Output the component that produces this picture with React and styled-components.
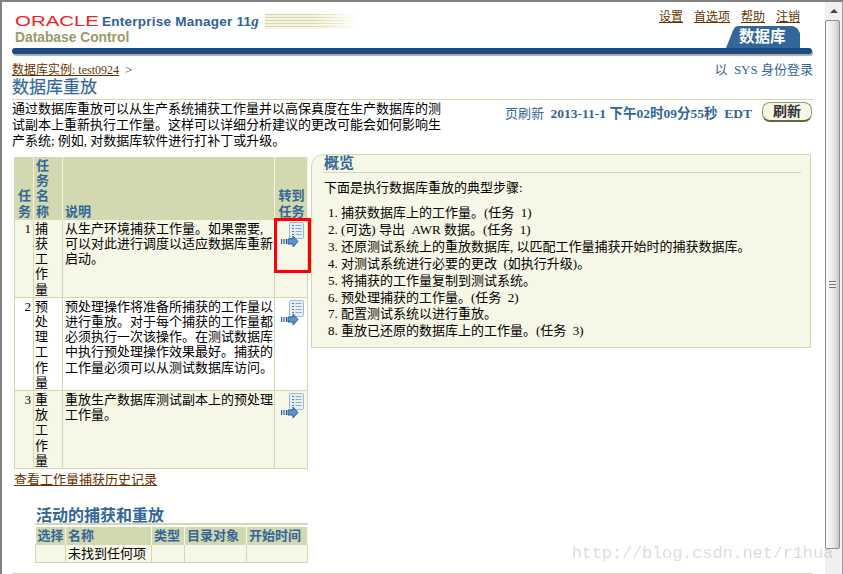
import React from "react";
import styled, { createGlobalStyle } from "styled-components";

const Global = createGlobalStyle`
  html, body { margin: 0; padding: 0; background: #fff; overflow: hidden; }
  body { font-family: "Liberation Serif", "Noto Sans CJK SC", serif; font-size: 13px; color: #000; }
`;

const Frame = styled.div`
  position: relative;
  display: flex;
  width: 843px;
  height: 574px;
  box-sizing: border-box;
  border-top: 2px solid #808080;
  border-left: 2px solid #808080;
  border-right: 1px solid #a0a0a0;
  overflow: hidden;
`;
const Page = styled.div`
  width: 823px;
  flex: none;
  box-sizing: border-box;
  padding: 0 12px 0 10px;
  display: flex;
  flex-direction: column;
`;
const Masthead = styled.header`
  display: flex;
  justify-content: space-between;
  height: 46px;
`;
const Brand = styled.div`
  padding: 11px 0 0 3px;
  display: flex;
  flex-direction: column;
`;
const BrandTop = styled.div`
  display: flex;
  align-items: center;
  height: 16px;
`;
const OracleMark = styled.svg`
  width: 85px;
  height: 16px;
  flex: none;
`;
const ProductName = styled.span`
  margin-left: 2px;
  font: bold 13.5px "Liberation Sans", sans-serif;
  letter-spacing: 0.25px;
  color: #2f6296;
  white-space: nowrap;
`;
const Version = styled.i`
  font: italic bold 15px "Liberation Serif", serif;
`;
const Stripes = styled.div`
  width: 94px;
  height: 15px;
  margin-left: 6px;
  background: repeating-linear-gradient(to bottom, #d8d8a8 0 1px, #f4f4e0 1px 3px);
  -webkit-mask-image: linear-gradient(to right, #000 50%, transparent);
  mask-image: linear-gradient(to right, #000 50%, transparent);
`;
const DbControl = styled.div`
  margin-top: 1px;
  font: bold 13.8px "Liberation Sans", sans-serif;
  color: #9a9a68;
`;
const Global2 = styled.div`
  width: 141px;
  margin-right: 13px;
  display: flex;
  flex-direction: column;
  align-items: flex-end;
`;
const TopLinks = styled.nav`
  display: flex;
  gap: 11px;
  padding-top: 8px;
  height: 16px;
  white-space: nowrap;
`;
const TopLink = styled.a`
  font-size: 12px;
  line-height: 14px;
  color: #663300;
  text-decoration: underline;
`;
const Tab = styled.div`
  width: 74px;
  height: 22px;
  box-sizing: border-box;
  background: #336699;
  color: #fff;
  font-weight: bold;
  font-size: 15.5px;
  line-height: 22px;
  padding-left: 13px;
  clip-path: polygon(0 100%, 7px 20%, 9px 4%, 12px 0, calc(100% - 7px) 0, calc(100% - 3px) 2px, 100% 7px, 100% 100%);
`;
const Bar = styled.div`
  height: 6px;
  margin-right: 1px;
  background: #1d4c82;
  border-radius: 4px;
  box-shadow: 1px 2px 1px #aaa;
`;
const CrumbRow = styled.div`
  display: flex;
  justify-content: space-between;
  margin-top: 8px;
  height: 16px;
  line-height: 16px;
`;
const Crumb = styled.div`
  font-size: 12px;
  color: #663300;
`;
const CrumbLink = styled.a`
  color: #663300;
  text-decoration: underline;
`;
const Sep = styled.span`
  margin-left: 6px;
  font-size: 13px;
`;
const LoginAs = styled.div`
  font-size: 13px;
  color: #336699;
  white-space: pre;
`;
const Title = styled.h1`
  margin: 0;
  height: 21px;
  font-size: 17px;
  line-height: 20px;
  font-weight: normal;
  color: #336699;
  border-bottom: 1px solid #d2d8b0;
  -webkit-text-stroke: 0.2px #336699;
`;
const IntroRow = styled.div`
  display: flex;
  justify-content: space-between;
  align-items: flex-start;
  height: 54px;
`;
const Intro = styled.p`
  margin: 1px 0 0;
  width: 432px;
  line-height: 16px;
`;
const Refresh = styled.div`
  display: flex;
  align-items: center;
  margin-right: 1px;
  color: #336699;
  font-size: 13px;
  padding-top: 2px;
  white-space: pre;
`;
const Strong = styled.b`
  font-weight: bold;
  font-size: 13.5px;
`;
const RefreshButton = styled.button`
  margin-left: 10px;
  width: 50px;
  height: 20px;
  padding: 0;
  border: 1px solid #99996a;
  border-bottom: 2px solid #66663a;
  border-radius: 8px;
  background: #f7f7e7;
  color: #333;
  font: bold 14px "Liberation Serif", "Noto Sans CJK SC", serif;
  line-height: 16px;
`;
const Columns = styled.div`
  display: flex;
  align-items: flex-start;
  height: 312px;
`;
const LeftCol = styled.div`
  margin-left: 2px;
  margin-top: 3px;
  width: 294px;
  flex: none;
`;
const TaskTable = styled.table`
  position: relative;
  width: 293px;
  table-layout: fixed;
  border-collapse: collapse;
  line-height: 15.2px;
  border: 1px solid #d2d8b0;
`;
const HeadCell = styled.th`
  padding: 0 1px 0 2px;
  background: #d2d8b0;
  color: #336699;
  font-weight: bold;
  font-size: 13px;
  text-align: ${(p) => p.$align || "left"};
  vertical-align: bottom;
  border-right: 1px solid #f2f4e2;
`;
const TaskRow = styled.tr`
  background: ${(p) => (p.$odd ? "#f7f7e7" : "#fff")};
`;
const Cell = styled.td`
  padding: 1px 2px 0;
  vertical-align: top;
  text-align: ${(p) => p.$align || "left"};
  border: 1px solid #d2d8b0;
`;
const NameCell = styled(Cell)`
  padding-left: 1px;
`;
const DescCell = styled(Cell)`
  padding-right: 0;
`;
const GoCell = styled(Cell)`
  position: relative;
`;
const GoIcon = styled.svg`
  display: block;
  width: 26px;
  height: 28px;
  margin: 1px 0 0 3px;
`;
const Highlight = styled.div`
  position: absolute;
  left: -1px;
  top: -2px;
  width: 37px;
  height: 55px;
  box-sizing: border-box;
  border: 3px solid #f00;
  pointer-events: none;
`;
const HistoryLink = styled.a`
  display: block;
  margin-top: 3px;
  line-height: 16px;
  color: #663300;
  text-decoration: underline;
`;
const ActiveBlock = styled.section`
  margin: 18px 0 0 21px;
`;
const SubTitle = styled.h2`
  margin: 0;
  height: 17px;
  font-size: 16px;
  line-height: 19px;
  color: #336699;
  font-weight: bold;
  border-bottom: 2px solid #d2d8b0;
  padding-left: 1px;
`;
const ActiveTable = styled.table`
  width: 272px;
  margin-top: 2px;
  table-layout: fixed;
  border-collapse: collapse;
`;
const ActiveHead = styled.th`
  height: 17px;
  padding: 0 1px 0 2px;
  background: #d2d8b0;
  color: #336699;
  font-size: 13px;
  line-height: 16px;
  text-align: left;
  white-space: nowrap;
  border-right: 1px solid #f7f7e7;
`;
const ActiveCell = styled.td`
  height: 17px;
  padding: 0 2px;
  line-height: 16px;
  background: #f7f7e7;
  border: 1px solid #d2d8b0;
`;
const Overview = styled.aside`
  margin: 0 0 0 3px;
  width: 500px;
  height: 194px;
  box-sizing: border-box;
  background: #f7f7e7;
  border: 1px solid #d2d8b0;
  border-top-left-radius: 12px;
  padding: 0 9px 0 11px;
`;
const OverviewTitle = styled.h2`
  margin: 0;
  height: 17px;
  font-size: 15px;
  line-height: 16px;
  color: #336699;
  font-weight: bold;
  border-bottom: 1px solid #d2d8b0;
  padding-left: 1px;
`;
const OverviewLead = styled.p`
  margin: 7px 0 0 1px;
  line-height: 16px;
`;
const Steps = styled.ol`
  margin: 9px 0 0;
  padding: 0 0 0 18px;
  line-height: 16.9px;
`;
const Step = styled.li`
  white-space: pre;
`;
const Footer = styled.div`
  margin-top: auto;
  height: 1px;
  background: #d2d8b0;
`;
const ScrollTrack = styled.div`
  width: 17px;
  flex: none;
  background: #f0f0ee;
  display: flex;
  flex-direction: column;
`;
const ScrollUp = styled.div`
  height: 18px;
  display: flex;
  align-items: center;
  justify-content: center;
  &::before {
    content: "";
    border-left: 4px solid transparent;
    border-right: 4px solid transparent;
    border-bottom: 4px solid #444;
  }
`;
const ScrollThumb = styled.div`
  width: 15px;
  height: 529px;
  box-sizing: border-box;
  border: 1px solid #8f8f8f;
  border-radius: 2px;
  background: linear-gradient(to right, #fafafa, #e8e8e8 60%, #c8c8c8);
  display: flex;
  align-items: center;
  justify-content: center;
  &::before {
    content: "";
    width: 7px;
    height: 7px;
    background: repeating-linear-gradient(to bottom, #777 0 1px, #eee 1px 3px);
  }
`;
const Watermark = styled.div`
  position: absolute;
  right: 9px;
  bottom: 11px;
  font: 17px "Liberation Mono", monospace;
  letter-spacing: -0.15px;
  color: rgba(150, 150, 150, 0.34);
  white-space: nowrap;
`;

const Go = () => (
  <GoIcon viewBox="0 0 26 28">
    <rect x="9.5" y="0.5" width="14" height="16" rx="1" fill="#e6eef6" stroke="#9db8d4" />
    <path d="M12 3.5h2M12 6.5h2M12 9.5h2M12 12.5h2" stroke="#4a7aaa" strokeWidth="1.2" />
    <path d="M15.5 3.5h6M15.5 6.5h6M15.5 9.5h6M15.5 12.5h6" stroke="#8aa8c8" strokeWidth="1.1" />
    <path d="M1 17h1.2v5H1zM3.4 17h1.2v5H3.4zM5.8 17h1.2v5H5.8z" fill="#2b5f96" />
    <path d="M8 17h5v-3l5 5.5-5 5.5v-3H8z" fill="#5b94cc" stroke="#2b5f96" strokeWidth="1" />
  </GoIcon>
);

const tasks = [
  ["1", "捕获工作量", "从生产环境捕获工作量。如果需要, 可以对此进行调度以适应数据库重新启动。", true],
  ["2", "预处理工作量", "预处理操作将准备所捕获的工作量以进行重放。对于每个捕获的工作量都必须执行一次该操作。在测试数据库中执行预处理操作效果最好。捕获的工作量必须可以从测试数据库访问。", false],
  ["3", "重放工作量", "重放生产数据库测试副本上的预处理工作量。", true],
];
const steps = [
  "捕获数据库上的工作量。(任务  1)",
  "(可选) 导出  AWR 数据。(任务  1)",
  "还原测试系统上的重放数据库, 以匹配工作量捕获开始时的捕获数据库。",
  "对测试系统进行必要的更改  (如执行升级)。",
  "将捕获的工作量复制到测试系统。",
  "预处理捕获的工作量。(任务  2)",
  "配置测试系统以进行重放。",
  "重放已还原的数据库上的工作量。(任务  3)",
];

export default function App() {
  return (
    <Frame>
      <Global />
      <Page>
        <Masthead>
          <Brand>
            <BrandTop>
              <OracleMark viewBox="0 0 85 16">
                <text x="0" y="13" fontFamily="Liberation Sans" fontSize="14" fill="#e8231f" textLength="84" lengthAdjust="spacingAndGlyphs">ORACLE</text>
              </OracleMark>
              <ProductName>Enterprise Manager 11<Version>g</Version></ProductName>
              <Stripes />
            </BrandTop>
            <DbControl>Database Control</DbControl>
          </Brand>
          <Global2>
            <TopLinks>
              <TopLink>设置</TopLink>
              <TopLink>首选项</TopLink>
              <TopLink>帮助</TopLink>
              <TopLink>注销</TopLink>
            </TopLinks>
            <Tab>数据库</Tab>
          </Global2>
        </Masthead>
        <Bar />
        <CrumbRow>
          <Crumb><CrumbLink>数据库实例: test0924</CrumbLink><Sep>&gt;</Sep></Crumb>
          <LoginAs>以  SYS 身份登录</LoginAs>
        </CrumbRow>
        <Title>数据库重放</Title>
        <IntroRow>
          <Intro>通过数据库重放可以从生产系统捕获工作量并以高保真度在生产数据库的测试副本上重新执行工作量。这样可以详细分析建议的更改可能会如何影响生产系统; 例如, 对数据库软件进行打补丁或升级。</Intro>
          <Refresh>
            页刷新  <Strong>2013-11-1 下午02时09分55秒  EDT</Strong>
            <RefreshButton>刷新</RefreshButton>
          </Refresh>
        </IntroRow>
        <Columns>
          <LeftCol>
            <TaskTable>
              <colgroup>
                <col width="19" />
                <col width="29" />
                <col width="212" />
                <col width="33" />
              </colgroup>
              <thead>
                <tr>
                  <HeadCell $align="center">任务</HeadCell>
                  <HeadCell>任务名称</HeadCell>
                  <HeadCell>说明</HeadCell>
                  <HeadCell $align="center">转到任务</HeadCell>
                </tr>
              </thead>
              <tbody>
                {tasks.map(([n, name, desc, odd], i) => (
                  <TaskRow key={n} $odd={odd}>
                    <Cell $align="right">{n}</Cell>
                    <NameCell>{name}</NameCell>
                    <DescCell>{desc}</DescCell>
                    <GoCell>
                      <Go />
                      {i === 0 && <Highlight />}
                    </GoCell>
                  </TaskRow>
                ))}
              </tbody>
            </TaskTable>
            <HistoryLink>查看工作量捕获历史记录</HistoryLink>
            <ActiveBlock>
              <SubTitle>活动的捕获和重放</SubTitle>
              <ActiveTable>
                <colgroup>
                  <col width="30" />
                  <col width="86" />
                  <col width="33" />
                  <col width="62" />
                  <col width="61" />
                </colgroup>
                <thead>
                  <tr>
                    <ActiveHead>选择</ActiveHead>
                    <ActiveHead>名称</ActiveHead>
                    <ActiveHead>类型</ActiveHead>
                    <ActiveHead>目录对象</ActiveHead>
                    <ActiveHead>开始时间</ActiveHead>
                  </tr>
                </thead>
                <tbody>
                  <tr>
                    <ActiveCell />
                    <ActiveCell>未找到任何项</ActiveCell>
                    <ActiveCell />
                    <ActiveCell />
                    <ActiveCell />
                  </tr>
                </tbody>
              </ActiveTable>
            </ActiveBlock>
          </LeftCol>
          <Overview>
            <OverviewTitle>概览</OverviewTitle>
            <OverviewLead>下面是执行数据库重放的典型步骤:</OverviewLead>
            <Steps>
              {steps.map((s) => <Step key={s}>{s}</Step>)}
            </Steps>
          </Overview>
        </Columns>
        <Footer />
      </Page>
      <ScrollTrack>
        <ScrollUp />
        <ScrollThumb />
      </ScrollTrack>
      <Watermark>http://blog.csdn.net/r1hua</Watermark>
    </Frame>
  );
}
